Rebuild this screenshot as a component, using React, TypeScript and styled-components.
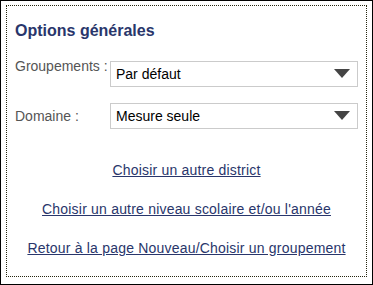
import React from "react";
import styled, { createGlobalStyle } from "styled-components";

const Global = createGlobalStyle`
  html, body { margin: 0; padding: 0; background: #fff; }
  body { font-family: "Liberation Sans", Arial, sans-serif; }
  * { box-sizing: border-box; }
`;

const Frame = styled.div`
  width: 373px;
  height: 285px;
  border: 1px solid #000;
  background: #fff;
  padding: 4px 5px 7px 5px;
  display: flex;
`;

const Panel = styled.div`
  flex: 1;
  border: 1px dotted #262610;
  padding: 16px 8px 0 8px;
  display: flex;
  flex-direction: column;
`;

const Title = styled.h2`
  margin: 0 0 18px 0;
  font-size: 16px;
  line-height: 18px;
  font-weight: bold;
  color: #29366b;
`;

const Form = styled.div`
  display: grid;
  grid-template-columns: 95px 248px;
  row-gap: 16px;
`;

const Label = styled.label<{ $top?: boolean }>`
  font-size: 14px;
  line-height: 16px;
  color: #555;
  align-self: ${(p) => (p.$top ? "start" : "center")};
  white-space: nowrap;
`;

const SelectWrap = styled.div<{ $offset?: number }>`
  position: relative;
  height: 26px;
  margin-top: ${(p) => p.$offset ?? 0}px;
`;

const Select = styled.select`
  appearance: none;
  -webkit-appearance: none;
  width: 100%;
  height: 100%;
  border: 1px solid #cbcbcb;
  border-radius: 0;
  background: #fff;
  font-family: "Liberation Sans", Arial, sans-serif;
  font-size: 14px;
  color: #000;
  padding: 0 0 0 5px;
  margin: 0;
  outline: none;
`;

const Arrow = styled.svg`
  position: absolute;
  right: 8px;
  top: 8px;
  pointer-events: none;
`;

const Links = styled.div`
  margin-top: 33px;
  display: flex;
  flex-direction: column;
  align-items: center;
  gap: 23px;
`;

const Link = styled.a`
  font-size: 14px;
  line-height: 16px;
  letter-spacing: 0.2px;
  color: #29366b;
  text-decoration: underline;
  white-space: nowrap;
`;

const Caret = () => (
  <Arrow width="16" height="9" viewBox="0 0 16 9">
    <polygon points="0,0 16,0 8,9" fill="#444" />
  </Arrow>
);

export default function App() {
  return (
    <>
      <Global />
      <Frame>
        <Panel>
          <Title>Options générales</Title>
          <Form>
            <Label $top>Groupements :</Label>
            <SelectWrap $offset={3}>
              <Select defaultValue="defaut">
                <option value="defaut">Par défaut</option>
              </Select>
              <Caret />
            </SelectWrap>
            <Label>Domaine :</Label>
            <SelectWrap>
              <Select defaultValue="mesure">
                <option value="mesure">Mesure seule</option>
              </Select>
              <Caret />
            </SelectWrap>
          </Form>
          <Links>
            <Link href="#">Choisir un autre district</Link>
            <Link href="#">Choisir un autre niveau scolaire et/ou l'année</Link>
            <Link href="#">Retour à la page Nouveau/Choisir un groupement</Link>
          </Links>
        </Panel>
      </Frame>
    </>
  );
}
